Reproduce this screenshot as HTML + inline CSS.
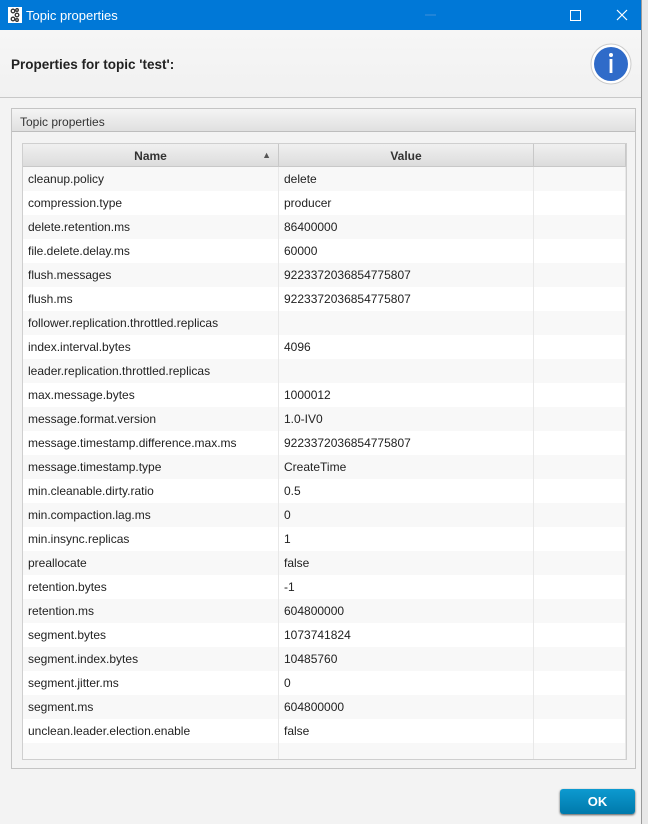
<!DOCTYPE html><html><head><style>
body{margin:0;width:648px;height:824px;background:#e8e8e8;font-family:"Liberation Sans",sans-serif;position:relative;overflow:hidden}
.win{position:absolute;left:0;top:0;width:641px;height:824px;background:#f3f3f3;border-right:1px solid #9a9a9a}
.tb{height:30px;background:#0078d7;color:#fff;font-size:13px;position:relative}
.tb .t{position:absolute;left:26px;top:8px}
.hdr{position:absolute;top:30px;left:0;width:641px;height:67px;background:linear-gradient(#f6f6f6,#f1f1f1);border-bottom:1px solid #c8c8c8}
.hdr b{position:absolute;left:11px;top:27px;font-size:13.5px;color:#222}
.panel{position:absolute;left:11px;top:108px;width:623px;height:659px;border:1px solid #c4c4c4;background:#f3f3f3}
.ph{height:23px;background:linear-gradient(#f4f4f4,#e0e0e0);border-bottom:1px solid #bdbdbd;font-size:12px;color:#333;padding:6px 0 0 8px;box-sizing:border-box}
.tbl{position:absolute;left:10px;top:34px;width:603px;height:615px;border:1px solid #cfcfcf;background:#fff;overflow:hidden}
.row{height:24px;display:flex;font-size:12px;color:#222}
.row div{box-sizing:border-box;padding:5px 0 0 5px;border-right:1px solid #e8e8e8}
.row:nth-child(odd){background:#f8f8f8}
.c1{width:256px}.c2{width:255px}.c3{width:92px}
.head{height:23px;display:flex;font-size:12px;font-weight:bold;color:#333;background:linear-gradient(#f0f0f0,#dcdcdc);border-bottom:1px solid #c8c8c8;box-sizing:border-box}
.head div{box-sizing:border-box;border-right:1px solid #c8c8c8;text-align:center;padding-top:5px;position:relative}
.ok{position:absolute;left:560px;top:789px;width:75px;height:25px;border-radius:3px;background:linear-gradient(#0d9ad0,#0079ab);color:#fff;font-weight:bold;font-size:13px;text-align:center;line-height:25px;box-shadow:0 1px 2px #555}
</style></head><body><div class="win">
<div class="tb"><svg style="position:absolute;left:8px;top:7px" width="14" height="16"><rect width="14" height="16" fill="#fff"/><g fill="none" stroke="#333" stroke-width="1.3"><circle cx="5" cy="4" r="1.8"/><circle cx="9" cy="8" r="1.8"/><circle cx="5" cy="12" r="1.8"/><circle cx="9" cy="3" r="1.3"/><circle cx="9" cy="13" r="1.3"/></g></svg><span class="t">Topic properties</span>
<svg style="position:absolute;left:420px;top:8px" width="220" height="16"><line x1="5" y1="7" x2="16" y2="7" stroke="#3f8fd9"/><rect x="150.5" y="2.5" width="10" height="10" fill="none" stroke="#fff"/><path d="M197 2 L207 12 M207 2 L197 12" stroke="#fff" stroke-width="1.2"/></svg></div>
<div class="hdr"><b>Properties for topic 'test':</b>
<svg style="position:absolute;left:590px;top:13px" width="42" height="42"><circle cx="21" cy="21" r="20" fill="#fff" stroke="#ccc"/><circle cx="21" cy="21" r="17" fill="#2f6bc9"/><circle cx="21" cy="12" r="2" fill="#fff"/><rect x="19.6" y="16" width="2.8" height="14" fill="#fff"/></svg></div>
<div class="panel"><div class="ph">Topic properties</div>
<div class="tbl"><div class="head"><div class="c1">Name<span style="position:absolute;right:7px;top:6px;font-size:9px;color:#555">▲</span></div><div class="c2">Value</div><div class="c3"></div></div>
<div>
<div class="row"><div class="c1">cleanup.policy</div><div class="c2">delete</div><div class="c3"></div></div>
<div class="row"><div class="c1">compression.type</div><div class="c2">producer</div><div class="c3"></div></div>
<div class="row"><div class="c1">delete.retention.ms</div><div class="c2">86400000</div><div class="c3"></div></div>
<div class="row"><div class="c1">file.delete.delay.ms</div><div class="c2">60000</div><div class="c3"></div></div>
<div class="row"><div class="c1">flush.messages</div><div class="c2">9223372036854775807</div><div class="c3"></div></div>
<div class="row"><div class="c1">flush.ms</div><div class="c2">9223372036854775807</div><div class="c3"></div></div>
<div class="row"><div class="c1">follower.replication.throttled.replicas</div><div class="c2"></div><div class="c3"></div></div>
<div class="row"><div class="c1">index.interval.bytes</div><div class="c2">4096</div><div class="c3"></div></div>
<div class="row"><div class="c1">leader.replication.throttled.replicas</div><div class="c2"></div><div class="c3"></div></div>
<div class="row"><div class="c1">max.message.bytes</div><div class="c2">1000012</div><div class="c3"></div></div>
<div class="row"><div class="c1">message.format.version</div><div class="c2">1.0-IV0</div><div class="c3"></div></div>
<div class="row"><div class="c1">message.timestamp.difference.max.ms</div><div class="c2">9223372036854775807</div><div class="c3"></div></div>
<div class="row"><div class="c1">message.timestamp.type</div><div class="c2">CreateTime</div><div class="c3"></div></div>
<div class="row"><div class="c1">min.cleanable.dirty.ratio</div><div class="c2">0.5</div><div class="c3"></div></div>
<div class="row"><div class="c1">min.compaction.lag.ms</div><div class="c2">0</div><div class="c3"></div></div>
<div class="row"><div class="c1">min.insync.replicas</div><div class="c2">1</div><div class="c3"></div></div>
<div class="row"><div class="c1">preallocate</div><div class="c2">false</div><div class="c3"></div></div>
<div class="row"><div class="c1">retention.bytes</div><div class="c2">-1</div><div class="c3"></div></div>
<div class="row"><div class="c1">retention.ms</div><div class="c2">604800000</div><div class="c3"></div></div>
<div class="row"><div class="c1">segment.bytes</div><div class="c2">1073741824</div><div class="c3"></div></div>
<div class="row"><div class="c1">segment.index.bytes</div><div class="c2">10485760</div><div class="c3"></div></div>
<div class="row"><div class="c1">segment.jitter.ms</div><div class="c2">0</div><div class="c3"></div></div>
<div class="row"><div class="c1">segment.ms</div><div class="c2">604800000</div><div class="c3"></div></div>
<div class="row"><div class="c1">unclean.leader.election.enable</div><div class="c2">false</div><div class="c3"></div></div>
<div class="row"><div class="c1"></div><div class="c2"></div><div class="c3"></div></div>
</div></div></div>
<div class="ok">OK</div>
</div></body></html>
